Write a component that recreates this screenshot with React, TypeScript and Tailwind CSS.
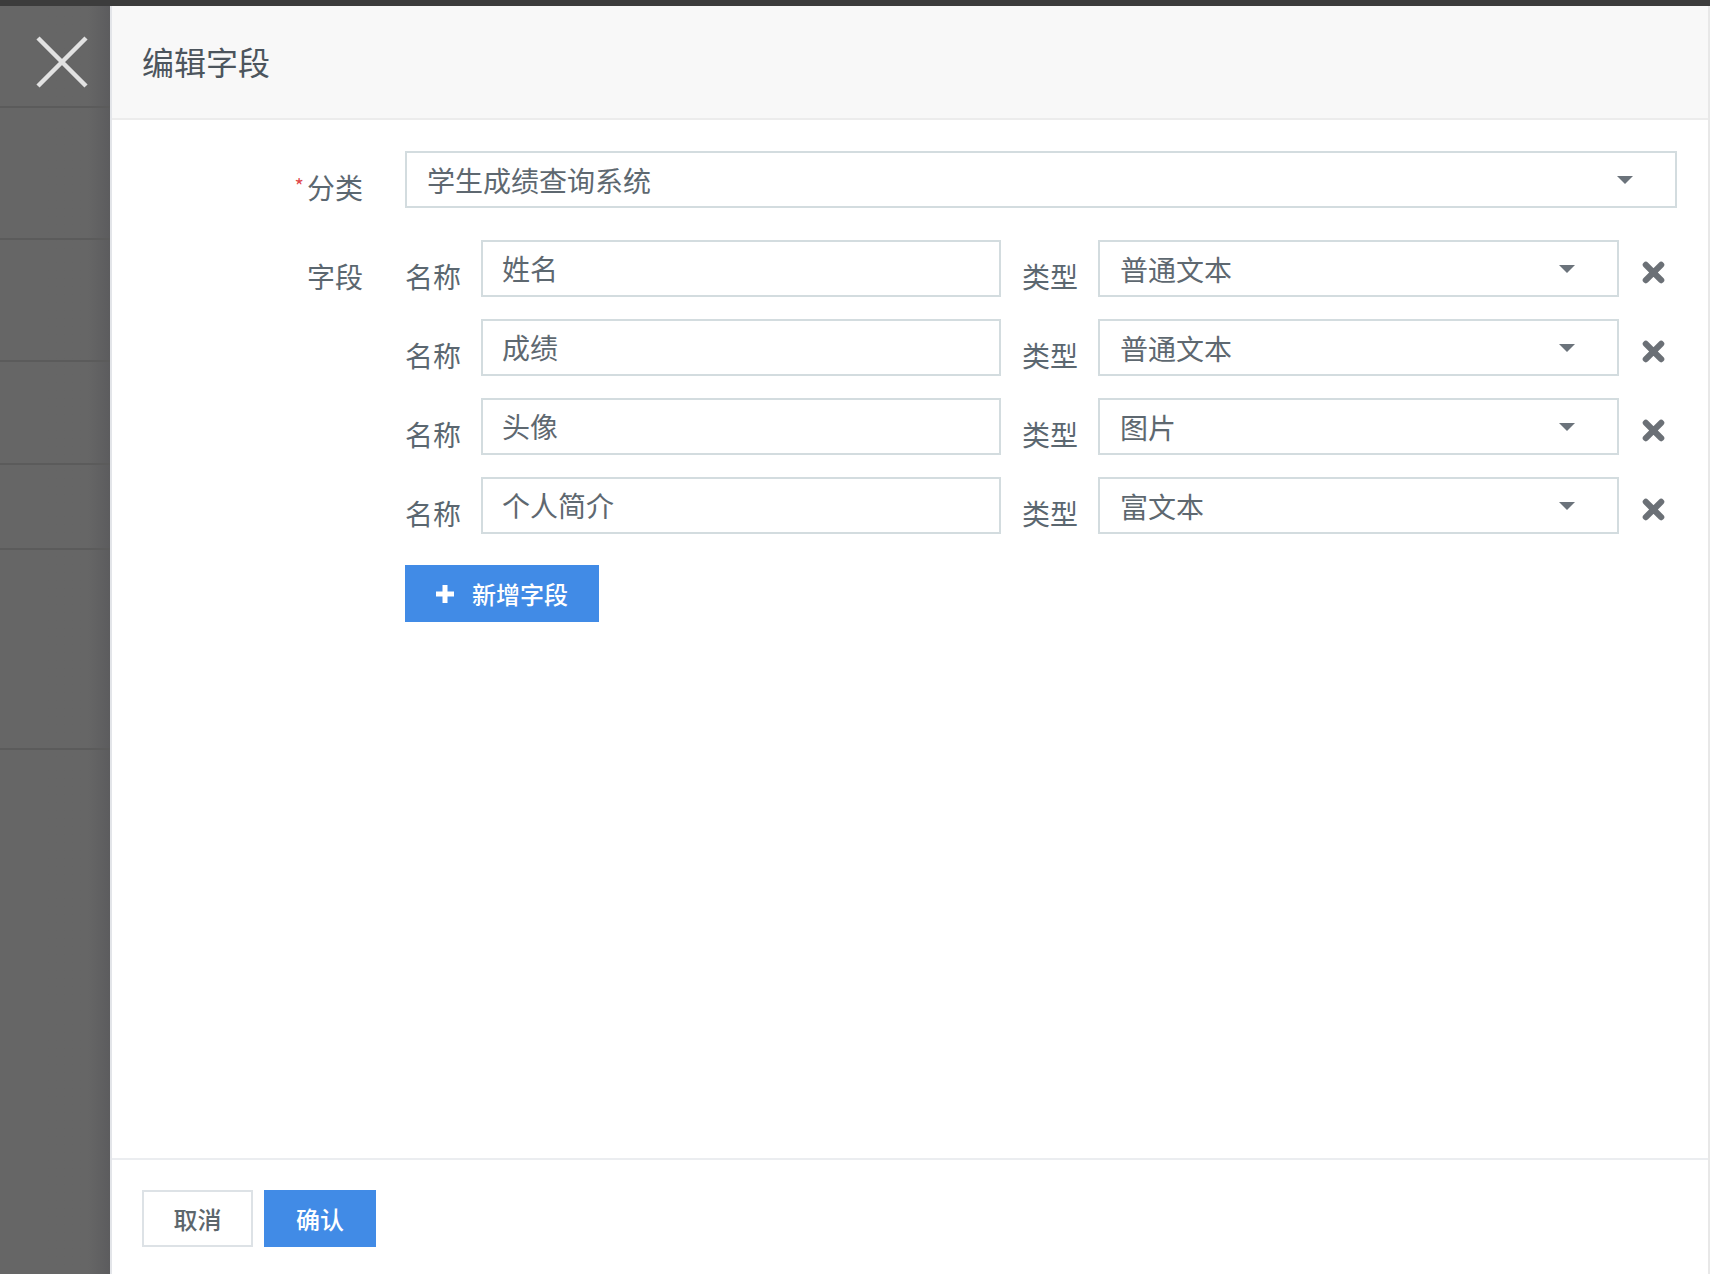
const font = {
  fontFamily: '"Noto Sans CJK SC", "Noto Sans", sans-serif',
};

const fields = [
  { name: "姓名", type: "普通文本" },
  { name: "成绩", type: "普通文本" },
  { name: "头像", type: "图片" },
  { name: "个人简介", type: "富文本" },
];

function Caret() {
  return (
    <svg width="16" height="8" viewBox="0 0 16 8" className="shrink-0">
      <polygon points="0,0 16,0 8,8" fill="#6b737b" />
    </svg>
  );
}

function Remove() {
  return (
    <svg width="23" height="23" viewBox="0 0 24 24">
      <path
        d="M4 4 L20 20 M20 4 L4 20"
        stroke="#6b7076"
        strokeWidth="6.5"
        strokeLinecap="round"
      />
    </svg>
  );
}

function SelectBox({ value, className = "" }: { value: string; className?: string }) {
  return (
    <div
      className={`flex h-[57px] items-center justify-between border-2 border-[#d3dcdf] bg-white pl-[20px] pr-[42px] text-[28px] text-[#5e6870] ${className}`}
    >
      <span>{value}</span>
      <Caret />
    </div>
  );
}

function FieldRow({ name, type }: { name: string; type: string }) {
  return (
    <div className="flex h-[57px] items-stretch">
      <div className="flex shrink-0 items-center whitespace-nowrap pt-[14px] text-[28px] text-[#5b6770]">名称</div>
      <div className="ml-[20px] flex w-[520px] shrink-0 items-center border-2 border-[#d3dcdf] bg-white pb-[2px] pl-[19px] text-[28px] text-[#5e6870]">
        {name}
      </div>
      <div className="ml-[21px] flex shrink-0 items-center whitespace-nowrap pt-[14px] text-[28px] text-[#5b6770]">类型</div>
      <SelectBox value={type} className="ml-[20px] w-[521px] shrink-0" />
      <div className="flex w-[58px] items-center pl-[23px] pt-[8px]">
        <Remove />
      </div>
    </div>
  );
}

export default function App() {
  return (
    <div className="flex h-[1274px] w-[1710px] flex-col overflow-hidden bg-[#666666]" style={font}>
      <div className="h-[6px] bg-[#3c3c3c]" />
      <div className="flex flex-1">
        {/* mask / sidebar */}
        <div className="flex w-[110px] flex-col bg-gradient-to-r from-[#666666] from-80% to-[#5c5c5e]">
          <div className="h-[100px] pl-[36px] pt-[30px]">
            <svg width="52" height="52" viewBox="0 0 52 52">
              <path d="M2 2 L50 50 M50 2 L2 50" stroke="#e2e2e2" strokeWidth="4.5" />
            </svg>
          </div>
          <div className="h-[132px] border-t-2 border-[#5b5b5b]" />
          <div className="h-[122px] border-t-2 border-[#5b5b5b]" />
          <div className="h-[103px] border-t-2 border-[#5b5b5b]" />
          <div className="h-[85px] border-t-2 border-[#5b5b5b]" />
          <div className="h-[200px] border-t-2 border-[#5b5b5b]" />
          <div className="flex-1 border-t-2 border-[#5b5b5b]" />
        </div>

        {/* panel */}
        <div className="flex flex-1 flex-col border-l-2 border-r-2 border-l-[#e3e5e9] border-r-[#e8e8e8] bg-white">
          <div className="flex h-[114px] items-center border-b-2 border-[#ececec] bg-[#f8f8f8] pl-[30px] pb-[2px]">
            <h1 className="text-[32px] text-[#4c555d]">编辑字段</h1>
          </div>

          <div className="flex flex-1 flex-col pt-[31px] pr-[31px]">
            <div className="flex h-[57px]">
              <div className="flex w-[251px] items-center justify-end pt-[14px] text-[28px] text-[#5b6770]">
                <span className="mr-[3px] -mt-[2px] text-[20px] text-[#e0474b]">*</span>
                分类
              </div>
              <SelectBox value="学生成绩查询系统" className="ml-[42px] flex-1" />
            </div>

            <div className="mt-[32px] flex">
              <div className="flex h-[57px] w-[251px] items-center justify-end pt-[14px] text-[28px] text-[#5b6770]">
                字段
              </div>
              <div className="ml-[42px] flex flex-1 flex-col">
                <div className="flex flex-col gap-[22px]">
                  {fields.map((f) => (
                    <FieldRow key={f.name} name={f.name} type={f.type} />
                  ))}
                </div>
                <div className="mt-[31px]">
                  <button className="flex h-[57px] w-[194px] items-center bg-[#418be6] pl-[30px] text-[24px] font-medium text-white">
                    <svg width="20" height="20" viewBox="0 0 20 20">
                      <path d="M10 1 V19 M1 10 H19" stroke="#ffffff" strokeWidth="5" />
                    </svg>
                    <span className="ml-[17px]">新增字段</span>
                  </button>
                </div>
              </div>
            </div>
          </div>

          <div className="flex h-[116px] gap-[11px] border-t-2 border-[#ebedf0] pl-[30px] pt-[30px]">
            <button className="flex h-[57px] w-[111px] items-center justify-center border-2 border-[#dde2e6] bg-white text-[24px] font-medium text-[#5c666c]">
              取消
            </button>
            <button className="flex h-[57px] w-[112px] items-center justify-center bg-[#418be6] text-[24px] font-medium text-white">
              确认
            </button>
          </div>
        </div>
      </div>
    </div>
  );
}
